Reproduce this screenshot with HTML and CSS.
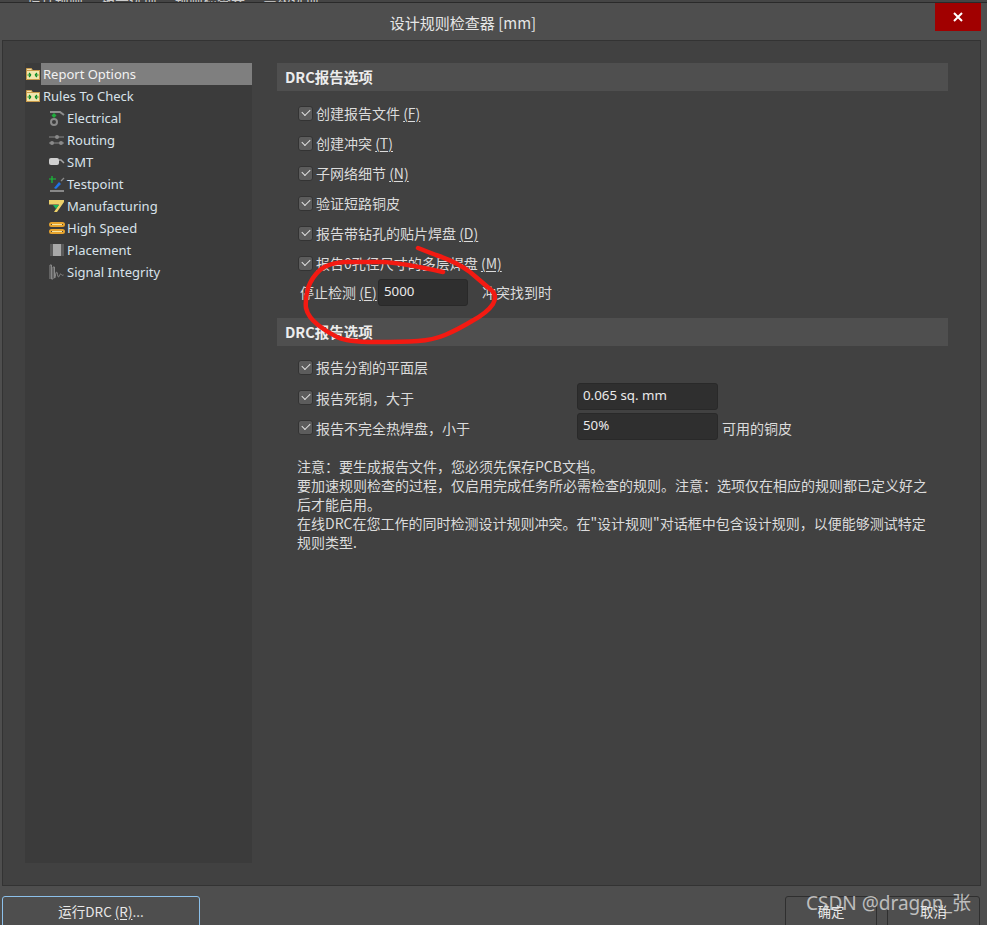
FILE: index.html
```html
<!DOCTYPE html>
<html lang="zh">
<head>
<meta charset="utf-8">
<title>设计规则检查器 [mm]</title>
<link rel="stylesheet" href="styles.css">
</head>
<body>
<div class="topstrip"><span>设计规则</span><span>报告选项</span><span>规则检查器</span><span>高级选项</span></div>
<div class="dialog">
  <header class="titlebar">
    <div class="title">设计规则检查器 [mm]</div>
    <div class="close"><svg width="10" height="10" viewBox="0 0 10 10"><path d="M1 1 9 9M9 1 1 9" stroke="#fff" stroke-width="2"/></svg></div>
  </header>
  <main class="body">
    <nav class="tree">
      <div class="node sel"><svg class="folder" width="14" height="12" viewBox="0 0 14 12"><path d="M.5 2.500V.5h5l1 2" fill="#f3e3b0" stroke="#c99a4a"/><rect x=".5" y="2.500" width="13" height="9" fill="#f2e6ae" stroke="#c99a4a"/><path d="M1.500 7h3.500M5 7 3 5M5 7 3 9M12.500 7H9M9 7l2-2M9 7l2 2" stroke="#0a8a24" stroke-width="1.100" fill="none"/></svg><span class="lbl">Report Options</span></div>
      <div class="node"><svg class="folder" width="14" height="12" viewBox="0 0 14 12"><path d="M.5 2.500V.5h5l1 2" fill="#f3e3b0" stroke="#c99a4a"/><rect x=".5" y="2.500" width="13" height="9" fill="#f2e6ae" stroke="#c99a4a"/><path d="M1.500 7h3.500M5 7 3 5M5 7 3 9M12.500 7H9M9 7l2-2M9 7l2 2" stroke="#0a8a24" stroke-width="1.100" fill="none"/></svg><span class="lbl">Rules To Check</span></div>
      <div class="node sub"><svg class="ico" width="16" height="16" viewBox="0 0 16 16"><path d="M1 2h10l4 3" stroke="#8d8d8d" stroke-width="2" fill="none"/><circle cx="5" cy="12" r="3" fill="none" stroke="#8a8a8a" stroke-width="2"/><path d="M5 3 7.500 5.500 5 8 2.500 5.500z" fill="#1fae3c"/></svg><span class="lbl">Electrical</span></div>
      <div class="node sub"><svg class="ico" width="16" height="16" viewBox="0 0 16 16"><path d="M0 5h15M0 11h15" stroke="#8a8a8a"/><circle cx="8" cy="5" r="2" fill="#8a8a8a"/><circle cx="3" cy="11" r="2" fill="#8a8a8a"/><circle cx="12" cy="11" r="2" fill="#8a8a8a"/></svg><span class="lbl">Routing</span></div>
      <div class="node sub"><svg class="ico" width="16" height="16" viewBox="0 0 16 16"><rect x="0" y="4" width="10" height="7" rx="2" fill="#d0d0d0"/><path d="M10 6h2l3 3" stroke="#a5a5a5" stroke-width="1.500" fill="none"/></svg><span class="lbl">SMT</span></div>
      <div class="node sub"><svg class="ico" width="16" height="16" viewBox="0 0 16 16"><path d="M3 0v7M0 3h7" stroke="#18c23a" stroke-width="1.200"/><path d="M5 12 10 6l2 2-5 5z" fill="#1e73e8"/><path d="M12 5l3-3" stroke="#8a8a8a" stroke-width="1.200"/><path d="M1 15h14" stroke="#d8d8d8"/></svg><span class="lbl">Testpoint</span></div>
      <div class="node sub"><svg class="ico" width="16" height="16" viewBox="0 0 16 16"><path d="M0 2h15v2L8 14H5l5-7.500H0z" fill="#ecd06a"/><path d="M4 7h6L7 11z" fill="#19b85c"/></svg><span class="lbl">Manufacturing</span></div>
      <div class="node sub"><svg class="ico" width="16" height="16" viewBox="0 0 16 16"><g fill="none" stroke="#e6a32e" stroke-width="2"><rect x="1" y="3" width="14" height="3" rx="1.500"/><rect x="1" y="10" width="14" height="3" rx="1.500"/></g><path d="M3 4.500h10M3 11.500h10" stroke="#f4e3a0"/></svg><span class="lbl">High Speed</span></div>
      <div class="node sub"><svg class="ico" width="16" height="16" viewBox="0 0 16 16"><rect x="4" y="2" width="8" height="12" fill="#a8a8a8"/><path d="M1 3h3M1 5h3M1 7h3M1 9h3M1 11h3M1 13h3M12 3h3M12 5h3M12 7h3M12 9h3M12 11h3M12 13h3" stroke="#7c7c7c"/></svg><span class="lbl">Placement</span></div>
      <div class="node sub"><svg class="ico" width="16" height="16" viewBox="0 0 16 16"><path d="M1 15V1h1.500v14H4V3h1.500v11c1 1 1-6 2-6s1 5 2 5 1-3 2-3 1 2 3 1" stroke="#8a8a8a" fill="none"/></svg><span class="lbl">Signal Integrity</span></div>
    </nav>
    <section class="panel">
      <h2 class="band">DRC报告选项</h2>
      <div class="opts">
        <label class="opt"><i class="cb"></i>创建报告文件 <u class="gap">(F)</u></label>
        <label class="opt"><i class="cb"></i>创建冲突 <u class="gap">(T)</u></label>
        <label class="opt"><i class="cb"></i>子网络细节 <u class="gap">(N)</u></label>
        <label class="opt"><i class="cb"></i>验证短路铜皮</label>
        <label class="opt"><i class="cb"></i>报告带钻孔的贴片焊盘 <u class="gap">(D)</u></label>
        <label class="opt"><i class="cb"></i>报告0孔径尺寸的多层焊盘 <u class="gap">(M)</u></label>
        <div class="stop"><span class="stoplbl">停止检测 <u class="gap">(E)</u></span><span class="field small">5000</span><span class="after">冲突找到时</span></div>
      </div>
      <h2 class="band second">DRC报告选项</h2>
      <div class="opts2">
        <label class="row"><span class="rowlbl"><i class="cb"></i>报告分割的平面层</span></label>
        <div class="row r2"><span class="rowlbl"><i class="cb"></i>报告死铜，大于</span><span class="field">0.065 sq. mm</span></div>
        <div class="row r3"><span class="rowlbl"><i class="cb"></i>报告不完全热焊盘，小于</span><span class="field">50%</span><span class="unit">可用的铜皮</span></div>
      </div>
      <div class="notes">
        <p>注意：要生成报告文件，您必须先保存PCB文档。</p>
        <p>要加速规则检查的过程，仅启用完成任务所必需检查的规则。注意：选项仅在相应的规则都已定义好之后才能启用。</p>
        <p>在线DRC在您工作的同时检测设计规则冲突。在"设计规则"对话框中包含设计规则，以便能够测试特定规则类型.</p>
      </div>
    </section>
  </main>
  <footer class="foot">
    <button class="btn run">运行DRC <u>(R)</u>...</button>
    <div class="right">
      <button class="btn ok">确定</button>
      <button class="btn ok">取消</button>
    </div>
  </footer>
</div>
<svg class="scribble" width="987" height="925" viewBox="0 0 987 925"><path d="M418 248L436 255Q457 262 470 272Q483 283 490 289Q498 295 493 304Q487 313 472 321Q457 330 445 335Q433 340 418 341Q403 342 375 342Q347 342 337 337Q327 332 318 325Q308 317 306 308Q305 300 308 288Q312 277 320 270Q328 263 345 262Q363 262 383 262Q403 263 443 272" fill="none" stroke="#f31a12" stroke-width="4.500" stroke-linecap="round" stroke-linejoin="round"/></svg>
<div class="wm">CSDN @dragon_张</div>
</body>
</html>
```
FILE: styles.css
```css
* { box-sizing: border-box; }
html, body { margin: 0; height: 925px; overflow: hidden; }
body { background: #4e4e4e; color: #dcdcdc; font: 14px/18px "Noto Sans CJK SC", "Noto Sans", sans-serif; position: relative; }
.topstrip { height: 3px; background: #454545; border-bottom: 1px solid #2a2a2a; overflow: hidden; display: flex; gap: 18px; padding-left: 27px; font-size: 14px; line-height: 0; color: #ccc; }
.dialog { height: 922px; display: flex; flex-direction: column; }
.titlebar { height: 37px; padding-right: 61px; display: flex; justify-content: center; align-items: center; position: relative; background: #4e4e4e; flex: none; }
.title { font-size: 15px; color: #e6e6e6; margin-top: 3px; }
.close { position: absolute; right: 6px; top: 0; width: 46px; height: 28px; background: #a10000; display: flex; align-items: center; justify-content: center; }
.body { margin: 0 6px 0 2px; height: 846px; flex: none; background: #414141; border: 1px solid #333; display: flex; padding: 22px 0 0 22px; }
.tree { width: 227px; height: 800px; background: #3b3b3b; flex: none; font: 13px/22px "Noto Sans", sans-serif; color: #d8e2ea; }
.node { height: 22px; display: flex; align-items: center; padding-left: 1px; }
.node .folder { flex: none; margin-right: 1px; }
.node .lbl { height: 22px; flex: 1; padding-left: 2px; white-space: nowrap; }
.node.sel .lbl { background: #7f7f7f; color: #f2f2f2; }
.node.sub { padding-left: 24px; }
.node.sub .ico { flex: none; }
.panel { width: 671px; margin-left: 25px; flex: none; }
.band { height: 28px; margin: 0; background: #4f4f4f; font: 700 14.500px/28px "Noto Sans CJK SC", sans-serif; color: #ececec; padding-left: 8px; }
.band.second { margin-top: 12px; }
.opts { padding: 7px 0 0 21px; display: flex; flex-direction: column; }
.opt { height: 30px; display: flex; align-items: center; white-space: pre; }
.cb { width: 15px; height: 15px; flex: none; margin-right: 3px; border: 1px solid #333; border-radius: 3px; background: #5c5c5c; position: relative; }
.cb::after { content: ""; position: absolute; left: 3px; top: 2px; width: 7px; height: 4px; border-left: 1.500px solid #e4e4e4; border-bottom: 1.500px solid #e4e4e4; transform: rotate(-45deg); }
u { text-underline-offset: 2px; }
.stop { display: flex; align-items: center; height: 28px; margin-left: 2px; }
.stoplbl { white-space: pre; width: 78px; flex: none; }
.field { height: 27px; width: 141px; background: #2f2f2f; border: 1px solid #292929; border-radius: 3px; padding-left: 5px; font: 13.300px/23px "Noto Sans", sans-serif; color: #eaeaea; flex: none; }
.field.small { width: 90px; }
.after { margin-left: 14px; }
.opts2 { padding: 6px 0 0 21px; }
.row { display: flex; align-items: center; height: 30px; }
.rowlbl { width: 279px; display: flex; align-items: center; flex: none; }
.r2 { margin-top: -1px; }
.r2 .rowlbl, .r3 .rowlbl { margin-top: 3px; }
.unit { margin-left: 4px; margin-top: 3px; }
.notes { margin: 16px 0 0 20px; width: 634px; line-height: 19px; }
.notes p { margin: 0; }
.foot { flex: 1; display: flex; justify-content: space-between; padding: 10px 7px 0 2px; overflow: hidden; }
.btn { height: 40px; background: #4e4e4e; color: #e8e8e8; border: 1px solid #2f2f2f; border-radius: 3px; font: 13.500px/26px "Noto Sans CJK SC", sans-serif; padding: 0 0 11px; }
.run { width: 198px; border-color: #8cc0ea; }
.right { display: flex; gap: 10px; }
.ok { width: 92px; }
.ok + .ok { width: 93px; }
.scribble { position: absolute; left: 0; top: 0; pointer-events: none; }
.wm { position: absolute; left: 806px; top: 890px; font: 19px/26px "Noto Sans", "Noto Sans CJK SC", sans-serif; color: rgba(235,235,235,.72); white-space: nowrap; }
```
